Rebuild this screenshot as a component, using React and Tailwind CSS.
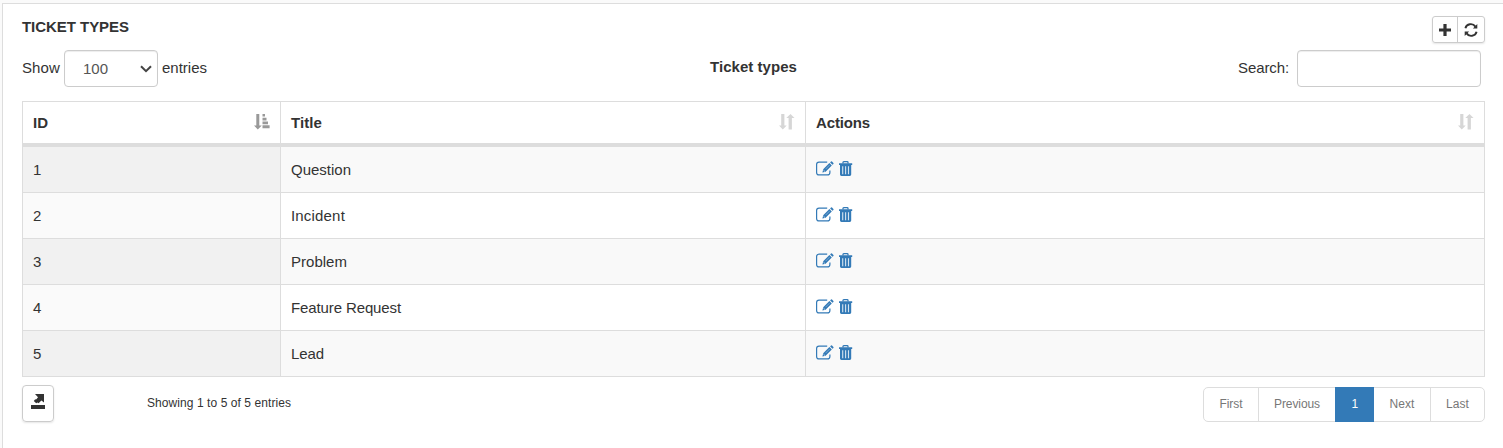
import React from "react";

const types = ["Question", "Incident", "Problem", "Feature Request", "Lead"];

function T({ w, children, className = "" }) {
  const ref = React.useRef(null);
  React.useLayoutEffect(() => {
    const el = ref.current;
    el.style.letterSpacing = "0px";
    const natural = el.getBoundingClientRect().width;
    el.style.letterSpacing = (w - natural) / children.length + "px";
  }, [w, children]);
  return (
    <span ref={ref} className={"inline-block whitespace-nowrap " + className}>
      {children}
    </span>
  );
}

function EditIcon() {
  return (
    <svg width="18" height="15" viewBox="0 0 18 15" className="block">
      <path d="M11.2 1.1H3Q.6 1.1 .6 3.6V11.4Q.6 13.9 3 13.9H11.4Q13.9 13.9 13.9 11.4V9.4" fill="none" stroke="#337ab7" strokeWidth="1.2" />
      <path d="M6.4 11.6L7.2 8.3L13.4 2.1L15.8 4.5L9.6 10.8ZM14.1 1.4L15 .5Q15.5 .1 16 .5L17.4 1.9Q17.8 2.4 17.4 2.9L16.5 3.8Z" fill="#337ab7" />
      <path d="M7.6 9.3L8.8 10.4" stroke="#fff" strokeWidth=".8" />
      <path d="M9.6 8.1L13.6 4.1" stroke="#a9c6e0" strokeWidth=".6" />
    </svg>
  );
}

function TrashIcon() {
  return (
    <svg width="14" height="15" viewBox="0 0 14 15" className="block">
      <path d="M4 2.5V1.5Q4 .7 4.8 .7H8.2Q9 .7 9 1.5V2.5" fill="none" stroke="#337ab7" strokeWidth="1.3" />
      <path d="M0 2.2H13.2V4.1H0ZM1 4.1H12.2V13.6Q12.2 15 10.8 15H2.4Q1 15 1 13.6Z" fill="#337ab7" />
      <path d="M3.7 5.2V13.2M6.6 5.2V13.2M9.5 5.2V13.2" stroke="#d3e3f0" strokeWidth="1.1" />
    </svg>
  );
}

function SortIcon({ active }) {
  return active ? (
    <svg width="16" height="16" viewBox="0 0 16 16" className="block">
      <path d="M2.3 0H5.3V11.5H7.8L3.8 15.5L0 11.5H2.3ZM8.5 0H11V2.5H8.5ZM8.5 3.7H12.5V6.4H8.5ZM8.5 7.6H14V10.2H8.5ZM8.5 11.3H15.6V14.3H8.5Z" fill="#999" />
    </svg>
  ) : (
    <svg width="16" height="16" viewBox="0 0 16 16" className="block">
      <path d="M2.2 0H5.4V11.5H7.7L3.8 15.5L0 11.5H2.2ZM9.6 15.5V4H7.3L11.5 0L15.5 4H12.9V15.5Z" fill="#d6d6d6" />
    </svg>
  );
}

function Header({ label, w, active }) {
  return (
    <th className="border border-[#ddd] border-b-4 pl-2.5 pr-2.5 pt-px text-left font-bold">
      <div className="flex items-center justify-between">
        <T w={w}>{label}</T>
        <span className="-mt-0.5"><SortIcon active={active} /></span>
      </div>
    </th>
  );
}

const pages = [
  { label: "First", w: 23, box: "w-[54px]" },
  { label: "Previous", w: 46, box: "w-[77px] border-l border-[#ddd]" },
  { label: "1", w: 6, box: "w-[39px] bg-[#337ab7] text-white -my-px h-[35px]" },
  { label: "Next", w: 25, box: "w-[56px]" },
  { label: "Last", w: 23, box: "w-[54px] border-l border-[#ddd]" },
];

export default function App() {
  return (
    <div className="h-[448px] overflow-hidden bg-[#fafafa] pl-0.5 pt-[3px] font-['Liberation_Sans',Arial,sans-serif] text-[15px] leading-5 text-[#333]">
      <main className="h-[445px] border-l border-t border-[#ddd] bg-white pl-[19px] pr-[18px]">
        <div className="flex h-[46px] items-start justify-between">
          <h1 className="mt-[13px] font-bold"><T w={107}>TICKET TYPES</T></h1>
          <div className="mt-3 flex h-[27px] w-[53px] rounded-[3px] border border-[#ccc] shadow-[0_1px_2px_rgba(0,0,0,.1)]">
            <button aria-label="Add" className="flex w-[25px] items-center justify-center border-r border-[#ccc]">
              <svg width="12" height="12" viewBox="0 0 12 12"><path d="M4.4 0H7.6V4.4H12V7.6H7.6V12H4.4V7.6H0V4.4H4.4Z" fill="#333" /></svg>
            </button>
            <button aria-label="Refresh" className="flex flex-1 items-center justify-center">
              <svg width="14" height="14" viewBox="0 0 14 14">
                <path d="M1.4 5.2A5.5 5.2 0 0 1 11.4 3.6M12.6 8.8A5.5 5.2 0 0 1 2.6 10.4" fill="none" stroke="#333" strokeWidth="1.9" />
                <path d="M13.3 1V5.6H8.9ZM.7 13V8.4H5.1Z" fill="#333" />
              </svg>
            </button>
          </div>
        </div>

        <div className="flex h-[51px] items-start">
          <label className="flex w-[688px] items-start">
            <T w={38} className="mr-1 mt-2">Show</T>
            <span className="flex h-[37px] w-[94px] items-center justify-between rounded border border-[#ccc] pl-[18px] pr-[5px] text-[#555] shadow-[inset_0_1px_1px_rgba(0,0,0,.075)]">
              <T w={25}>100</T>
              <svg width="12" height="8" viewBox="0 0 12 8"><path d="M1 1.2L6 6.2L11 1.2" fill="none" stroke="#444" strokeWidth="2" /></svg>
            </span>
            <T w={45} className="ml-1 mt-2">entries</T>
          </label>
          <div className="mt-[7px] flex-1 font-bold"><T w={87}>Ticket types</T></div>
          <label className="flex items-start pr-1">
            <T w={51} className="mt-2">Search:</T>
            <input className="ml-2 h-[37px] w-[184px] rounded border border-[#ccc] shadow-[inset_0_1px_1px_rgba(0,0,0,.075)] outline-none" />
          </label>
        </div>

        <table className="w-[1463px] table-fixed border-collapse">
          <colgroup>
            <col className="w-[258px]" />
            <col className="w-[525px]" />
            <col />
          </colgroup>
          <thead>
            <tr className="h-[43px]">
              <Header label="ID" w={15} active />
              <Header label="Title" w={31} />
              <Header label="Actions" w={54} />
            </tr>
          </thead>
          <tbody>
            {types.map((title, i) => (
              <tr key={title} className="h-[46px] first:h-[48px] odd:bg-[#f9f9f9]">
                <td className={"border border-[#ddd] px-2.5 pt-px " + (i % 2 ? "bg-[#fafafa]" : "bg-[#f1f1f1]")}>{i + 1}</td>
                <td className="border border-[#ddd] px-2.5 pt-px">
                  <T w={[60, 54, 56, 110, 33][i]}>{title}</T>
                </td>
                <td className="border border-[#ddd] px-2.5">
                  <div className="-mt-0.5 flex gap-[5px]"><EditIcon /><TrashIcon /></div>
                </td>
              </tr>
            ))}
          </tbody>
        </table>

        <footer className="flex items-start pt-2">
          <button aria-label="Export" className="flex h-[37px] w-8 justify-center rounded border border-[#ccc] pt-2 shadow-[0_1px_2px_rgba(0,0,0,.1)]">
            <svg width="14" height="16" viewBox="0 0 14 16">
              <path d="M0 11H14V15H0ZM4 0H13V8.5L10.4 6.4L7.6 9.2L6.4 8.4L5.2 9.2L2.8 7L4 5.6L5.4 5.2L7 3.2Z" fill="#333" />
            </svg>
          </button>
          <div className="ml-[93px] mt-2.5 flex-1 text-xs"><T w={144}>Showing 1 to 5 of 5 entries</T></div>
          <nav className="mt-0.5 flex h-[35px] w-[282px] rounded-[5px] border border-[#ddd] text-xs text-[#777]">
            {pages.map((p) => (
              <button key={p.label} className={"flex shrink-0 items-center justify-center pb-px " + p.box}>
                <T w={p.w}>{p.label}</T>
              </button>
            ))}
          </nav>
        </footer>
      </main>
    </div>
  );
}
